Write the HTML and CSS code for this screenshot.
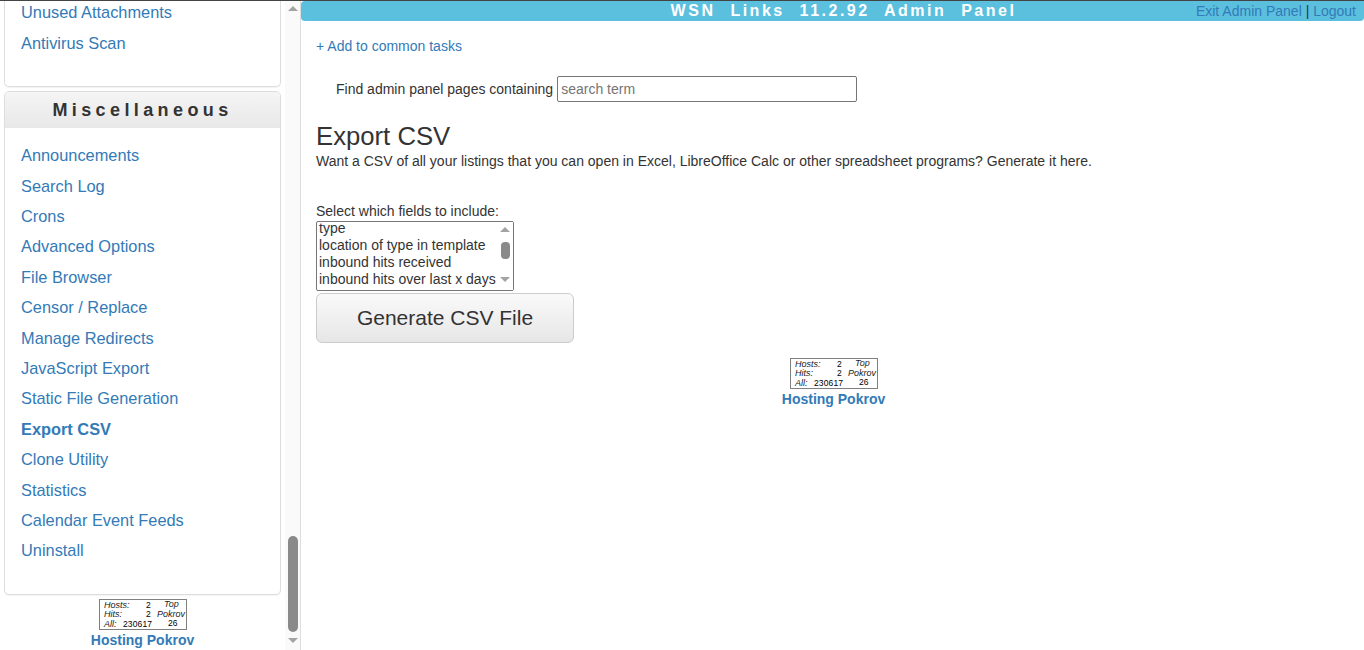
FILE: index.html
```html
<!DOCTYPE html>
<html lang="en">
<head>
    <meta charset="UTF-8">
    <title>WSN Links Admin Panel</title>
    <link rel="stylesheet" href="styles.css">
</head>
<body>
    <aside class="sidebar">
        <div class="side-scroll">
            <section class="panel panel-first">
                <ul class="side-links">
                    <li><a href="#">Unused Attachments</a></li>
                    <li><a href="#">Antivirus Scan</a></li>
                </ul>
            </section>
            <section class="panel">
                <h3 class="panel-title">Miscellaneous</h3>
                <ul class="side-links">
                    <li><a href="#">Announcements</a></li>
                    <li><a href="#">Search Log</a></li>
                    <li><a href="#">Crons</a></li>
                    <li><a href="#">Advanced Options</a></li>
                    <li><a href="#">File Browser</a></li>
                    <li><a href="#">Censor / Replace</a></li>
                    <li><a href="#">Manage Redirects</a></li>
                    <li><a href="#">JavaScript Export</a></li>
                    <li><a href="#">Static File Generation</a></li>
                    <li><a href="#" class="current">Export CSV</a></li>
                    <li><a href="#">Clone Utility</a></li>
                    <li><a href="#">Statistics</a></li>
                    <li><a href="#">Calendar Event Feeds</a></li>
                    <li><a href="#">Uninstall</a></li>
                </ul>
            </section>
            <div class="hosting hosting-side">
                <svg class="stamp" width="88" height="31" viewBox="0 0 88 31">
                    <rect x="0.5" y="0.5" width="87" height="30" fill="#fff" stroke="#808080"/>
                    <g class="stamp-labels">
                        <text x="5" y="9">Hosts:</text>
                        <text x="5" y="18">Hits:</text>
                        <text x="5" y="28">All:</text>
                        <text x="65" y="8">Top</text>
                        <text x="58" y="18">Pokrov</text>
                    </g>
                    <g class="stamp-digits">
                        <text x="47" y="9">2</text>
                        <text x="47" y="18">2</text>
                        <text x="24" y="28" textLength="29">230617</text>
                        <text x="69" y="26.5">26</text>
                    </g>
                </svg>
                <a href="#">Hosting Pokrov</a>
            </div>
        </div>
        <div class="scrollbar">
            <span class="arrow-up"></span>
            <span class="thumb"></span>
            <span class="arrow-down"></span>
        </div>
    </aside>

    <main class="content">
        <header class="topbar">
            <div class="topbar-title">WSN Links 11.2.92 Admin Panel</div>
            <div class="topbar-links"><a href="#">Exit Admin Panel</a> | <a href="#">Logout</a></div>
        </header>
        <div class="page">
            <p class="add-task"><a href="#">+ Add to common tasks</a></p>
            <form class="find-form">
                <label for="find">Find admin panel pages containing</label>
                <input type="text" id="find" placeholder="search term">
            </form>
            <h1>Export CSV</h1>
            <p class="intro">Want a CSV of all your listings that you can open in Excel, LibreOffice Calc or other spreadsheet programs? Generate it here.</p>
            <p class="fields-label">Select which fields to include:</p>
            <div class="listbox">
                <div class="listbox-items">
                    <div>type</div>
                    <div>location of type in template</div>
                    <div>inbound hits received</div>
                    <div>inbound hits over last x days</div>
                </div>
                <div class="listbox-bar">
                    <span class="arrow-up"></span>
                    <span class="listbox-thumb"></span>
                    <span class="arrow-down"></span>
                </div>
            </div>
            <button class="generate" type="button">Generate CSV File</button>
            <div class="hosting hosting-main">
                <svg class="stamp" width="88" height="31" viewBox="0 0 88 31">
                    <rect x="0.5" y="0.5" width="87" height="30" fill="#fff" stroke="#808080"/>
                    <g class="stamp-labels">
                        <text x="5" y="9">Hosts:</text>
                        <text x="5" y="18">Hits:</text>
                        <text x="5" y="28">All:</text>
                        <text x="65" y="8">Top</text>
                        <text x="58" y="18">Pokrov</text>
                    </g>
                    <g class="stamp-digits">
                        <text x="47" y="9">2</text>
                        <text x="47" y="18">2</text>
                        <text x="24" y="28" textLength="29">230617</text>
                        <text x="69" y="26.5">26</text>
                    </g>
                </svg>
                <a href="#">Hosting Pokrov</a>
            </div>
        </div>
    </main>
</body>
</html>
```

FILE: styles.css
```css
* {
    box-sizing: border-box;
}

html, body {
    height: 650px;
    margin: 0;
    overflow: hidden;
}

body {
    font-family: 'Liberation Sans', Arial, sans-serif;
    font-size: 14px;
    line-height: 20px;
    color: #333;
    background-color: #fff;
    display: flex;
    border-top: 1px solid #444;
}

a {
    color: #337ab7;
    text-decoration: none;
}

/* left column */
.sidebar {
    width: 301px;
    flex: none;
    display: flex;
    border-right: 1px solid #ddd;
}

.side-scroll {
    width: 285px;
    padding-left: 4px;
    flex: none;
}

.panel {
    width: 277px;
    background-color: #fff;
    border: 1px solid #ddd;
    border-radius: 5px;
    box-shadow: 0 1px 1px rgba(0, 0, 0, 0.05);
    margin-bottom: 4px;
}

.panel-first {
    border-top: none;
    border-top-left-radius: 0;
    border-top-right-radius: 0;
    height: 90px;
}

.panel-title {
    margin: 0;
    height: 36px;
    font-size: 18px;
    line-height: 36px;
    font-weight: bold;
    letter-spacing: 4.4px;
    text-align: center;
    color: #333;
    background: linear-gradient(to bottom, #f5f5f5, #e8e8e8);
    border-radius: 4px 4px 0 0;
}

.side-links {
    list-style: none;
    margin: 0;
    padding: 12.2px 0 27.8px 16px;
    font-size: 16.38px;
    line-height: 30.4px;
}

.panel-first .side-links {
    padding-top: 0;
    padding-bottom: 0;
    margin-top: -4px;
    line-height: 31px;
}

.current {
    font-weight: bold;
}

.hosting {
    display: flex;
    flex-direction: column;
    align-items: center;
    font-weight: bold;
}

.hosting-side {
    width: 277px;
    line-height: 20px;
}

.stamp {
    display: block;
}

.stamp-labels {
    font-family: 'Liberation Sans', Arial, sans-serif;
    font-size: 9px;
    font-style: italic;
    font-weight: normal;
    fill: #222;
}

.stamp-digits {
    font-family: 'Liberation Sans', Arial, sans-serif;
    font-size: 8.5px;
    font-weight: normal;
    fill: #000;
}

/* fake scrollbars */
.scrollbar {
    width: 15px;
    flex: none;
    display: flex;
    flex-direction: column;
    align-items: center;
    background-color: #fafafa;
}

.arrow-up, .arrow-down {
    width: 0;
    height: 0;
    border-left: 5px solid transparent;
    border-right: 5px solid transparent;
}

.arrow-up {
    border-bottom: 5px solid #a3a3a3;
}

.arrow-down {
    border-top: 5px solid #a3a3a3;
}

.scrollbar .arrow-up {
    margin-top: 5px;
}

.scrollbar .thumb {
    width: 10px;
    height: 96px;
    margin-top: auto;
    background-color: #8a8a8a;
    border-radius: 5px;
}

.scrollbar .arrow-down {
    margin: 6px 0 7px;
}

/* main area */
.content {
    flex: 1;
    min-width: 0;
}

.topbar {
    height: 20px;
    background-color: #5bc0de;
    border-radius: 4px 0 4px 4px;
    display: flex;
    align-items: center;
    position: relative;
}

.topbar-title {
    flex: 1;
    text-align: center;
    font-size: 16px;
    font-weight: bold;
    letter-spacing: 2.5px;
    word-spacing: 8px;
    color: #fff;
    padding-left: 22px;
}

.topbar-links {
    position: absolute;
    right: 8px;
    top: 0;
    line-height: 20px;
    color: #333;
}

.page {
    padding: 0 15px;
}

.add-task {
    margin: 15px 0 0;
}

.find-form {
    margin-top: 20px;
    padding-left: 20px;
    display: flex;
    align-items: center;
    gap: 4px;
}

.find-form input {
    width: 300px;
    height: 26px;
    border: 1px solid #767676;
    border-radius: 2px;
    padding: 1px 3px;
    font: 14px 'Liberation Sans', Arial, sans-serif;
}

.find-form input::placeholder {
    color: #757575;
}

h1 {
    margin: 20px 0 0;
    font-size: 25.7px;
    line-height: 28px;
    font-weight: normal;
}

.intro {
    margin: 1px 0 0;
}

.fields-label {
    margin: 30px 0 0;
}

.listbox {
    width: 198px;
    height: 70px;
    border: 1px solid #767676;
    border-radius: 2px;
    display: flex;
    overflow: hidden;
    line-height: 17px;
}

.listbox-items {
    flex: 1;
    padding-left: 2px;
    margin-top: -2px;
    white-space: nowrap;
}

.listbox-bar {
    width: 16px;
    flex: none;
    display: flex;
    flex-direction: column;
    align-items: center;
    background-color: #fff;
}

.listbox-bar .arrow-up {
    margin-top: 5px;
}

.listbox-thumb {
    width: 9px;
    height: 17px;
    margin-top: 10px;
    background-color: #8a8a8a;
    border-radius: 4px;
}

.listbox-bar .arrow-down {
    margin-top: auto;
    margin-bottom: 8px;
}

.generate {
    display: block;
    width: 258px;
    height: 50px;
    margin-top: 2px;
    font: 21px 'Liberation Sans', Arial, sans-serif;
    color: #333;
    background: linear-gradient(to bottom, #fafafa, #e6e6e6);
    border: 1px solid #ccc;
    border-radius: 6px;
}

.hosting-main {
    margin-top: 15px;
    padding-left: 2px;
}
```
